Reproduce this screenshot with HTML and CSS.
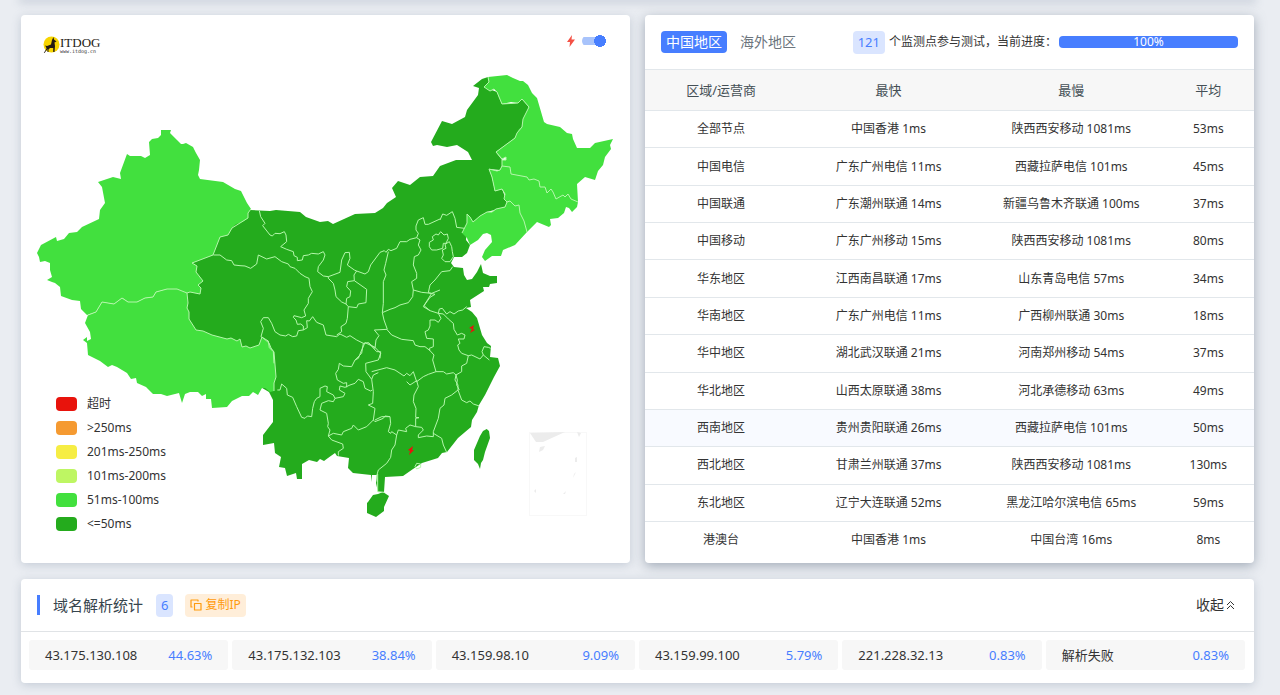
FILE: index.html
```html
<!DOCTYPE html>
<html lang="zh-CN">
<head>
<meta charset="utf-8">
<title>ITDOG 测速</title>
<link rel="stylesheet" href="styles.css">
</head>
<body>
<div class="prev-card"></div>
<main class="page">
  <div class="row">
    <section class="card map-card">
      <svg class="map" viewBox="21 15 609 548" role="img" aria-label="中国地图">
        <path class="dark" d="M250 210L270 211L276 210L300 212L306 217L320 222L328 221L333 224L355 214L375 213L383 208L387 203L396 197L392 188L398 181L410 185L420 177L433 176L440 166L456 160L472 160L468 152L457 145L447 147L437 145L433 146L431 142L442 121L452 124L465 117L467 110L478 95L479 88L473 86L482 79L488 77L489 82L484 87L497 92L502 104L518 103L522 99L529 107L522 127L515 138L496 152L502 160L502 166L500 170L489 169L492 177L495 191L502 189L507 202L505 207L487 212L473 222L467 223L466 240L470 245L467 253L462 257L454 257L451 263L454 267L463 268L464 275L467 280L472 279L477 272L481 264L483 273L490 276L497 276L497 283L490 284L489 287L483 287L484 291L470 300L471 307L466 308L472 312L477 318L482 335L487 343L491 346L490 357L498 358L500 366L494 377L490 385L485 395L479 405L477 412L472 420L471 427L458 438L447 452L442 453L438 458L422 463L413 469L403 476L385 477L384 492L378 492L376 483L377 475L372 475L372 482L371 475L353 473L348 468L349 458L337 456L335 453L328 458L324 461L320 459L317 462L309 460L302 464L302 479L297 479L296 473L287 476L285 468L279 467L281 457L275 453L274 443L263 445L263 435L273 422L273 400L269 392L240 375L175 335L175 280L205 240Z"/>
        <path class="dark" d="M368 502L373 495L378 494L383 492L389 496L384 507L384 511L376 517L367 513L367 503Z"/>
        <path class="dark" d="M486.700 429L489 431L490 438L485 452L483 460L481 463L480 469L478 464L474 460L474 450L477 443L480 436L483 431Z"/>
        <path class="light" d="M161 130L171 130L170 133L177 140L181 144L183 144L186 143L193 147L196 153L200 160L199 170L198 175L200 179L223 182L235 189L241 191L247 203L251 209L248 213L248 218L244 221L240 223L236 224L232 228L228 235L220 237L213 255L192 263L197 266L196 272L203 281L198 285L201 288L200 294L194 293L190 292L187 293L177 289L167 289L156 292L153 297L145 298L137 302L128 302L124 299L122 298L114 304L102 302L96 312L87 315L81 309L80 301L72 300L61 296L60 287L55 283L52 282L47 280L52 277L50 270L50 263L45 261L40 262L39 257L37 253L41 245L56 237L57 241L64 239L69 233L77 232L82 227L99 219L100 210L105 203L102 187L98 182L113 177L121 179L120 173L127 154L130 156L141 156L145 158L150 155L149 142L152 139L158 138L161 135Z"/>
        <path class="light" d="M88 315L96 312L102 302L114 304L122 298L128 302L137 302L145 298L153 297L156 292L167 289L177 289L187 293L187 297L188 303L187 308L189 312L189 319L196 330L203 331L212 335L227 339L231 338L237 341L240 339L242 347L246 346L250 348L259 345L262 337L269 343L271 348L274 352L276 377L274 383L274 391L270 392L265 388L262 388L258 395L253 392L249 396L242 396L232 401L227 407L212 408L211 399L206 399L206 394L202 396L198 392L190 392L185 394L182 403L179 393L167 396L161 394L153 394L146 387L137 383L136 378L131 379L127 373L117 367L112 365L108 367L100 361L88 355L87 343L83 340L87 337L87 341L91 339L90 332L85 323Z"/>
        <path class="light" d="M488 77L507 75L513 78L520 81L523 81L528 85L532 93L537 98L544 122L547 124L560 127L567 133L572 134L573 139L577 148L590 148L595 143L613 139L610 145L611 149L605 157L603 165L598 171L595 180L585 177L577 184L578 202L577 207L572 212L569 208L566 207L564 213L558 218L550 219L551 225L549 227L537 222L527 232L515 245L503 250L501 256L492 256L485 261L482 257L485 250L492 242L491 235L487 233L483 234L478 240L470 245L467 238L462 233L467 223L467 214L470 217L473 222L480 216L487 212L492 212L496 209L505 207L507 202L504 199L505 194L502 189L495 191L492 177L489 169L497 171L500 170L502 166L502 160L506 160L506 157L502 159L496 152L515 138L517 133L519 129L522 127L523 119L529 107L522 99L518 103L511 102L502 104L499 98L497 92L494 89L490 91L484 87L489 82Z"/>
        <g class="line">
          <path d="M251 209L248 213L248 218L240 223L232 228L228 235L220 237L213 255L192 263L197 266L196 272L203 281L198 285L201 288L200 294L190 292L187 293M88 315L96 312L102 302L114 304L122 298L128 302L137 302L145 298L153 297L156 292L167 289L177 289L187 293L188 303L187 308L189 312L189 319L196 330L203 331L212 335L227 339L231 338L237 341L240 339L242 347L246 346L250 348L259 345L262 337L269 343L271 348L274 352L276 377L274 383L274 391M462 233L467 223L467 214L470 217L473 222L480 216L487 212L492 212L496 209L505 207L507 202L504 199L505 194L502 189L495 191L492 177L489 169L497 171L500 170L502 166L502 160L506 160L506 157L502 159L496 152L515 138L517 133L522 127L523 119L529 107L522 99L518 103L502 104L497 92L494 89L490 91L484 87L489 82L488 77"/>
          <path d="M502 166L510 167L511 174L527 177L529 180L534 179L539 181L540 187L545 187L547 193L551 189L553 192L556 199L563 195L565 197L568 194L571 199L578 202M507 202L510 201L515 206L519 205L520 213L524 221L527 232"/>
          <g transform="translate(240 190) scale(.33333)">
            <path d="M58 62L62 80 75 100 68 107 90 135 97 138 105 130 120 131 133 125 138 135 140 155 122 170 140 178 160 185 162 197 172 202 172 212 187 210 190 197 205 195 215 190 235 192 250 185 255 195 250 210 235 230 233 245 250 258 265 260"/>
            <path d="M-80 195L-60 195-40 210-25 212-18 225 0 227 15 228 32 235 50 222 55 195 80 207 105 200 125 215 145 222 150 230 165 235 180 250 195 260 207 265 210 290 217 305 205 325 205 340 192 360 197 378 185 383 162 377 160 382 168 390 172 403 182 402 190 408 190 420 175 422 170 438 158 440 145 433 137 438 120 435 105 425 95 400 85 383 70 383 62 395 70 415 63 440 85 453 88 473 100 485 102 520"/>
            <path d="M265 260L300 247 305 210 315 188 328 187 330 205 322 225 343 240 350 243 342 255 343 272 323 275 320 290 332 303 330 320 320 325 318 342 305 336 288 320 285 300 280 280 265 265ZM343 272L380 298 378 338 355 342 350 353 325 350 318 342M350 243L375 252 385 245 392 225 420 187 433 182 438 187 445 178 453 182 470 175 480 155 500 155 510 148 530 143M445 185L437 220 432 240 438 255 430 275 430 340 427 368M530 143L540 150 535 165 543 180 535 195 523 200 520 225 530 250 530 265 515 275 520 300 518 320 505 338 480 345 465 353 450 358 427 368M530 143L535 130 528 120 528 108 535 90 550 83 555 103 565 103 600 87M325 350L322 385 318 400 303 410 305 425 290 435M190 420L202 413 200 392 208 393 218 380 230 397 250 405 258 435 290 440 300 432 320 442 330 437 350 450 370 460 385 458 405 475 408 450 417 437 403 420 442 418M427 368L432 390 442 418M370 460L365 490 345 510M385 458L410 485 422 485 420 505M520 300L545 307 575 310 600 300M575 310L550 350 570 362"/>
          </g>
          <g transform="translate(420 60) scale(.33333)"><path d="M60 480L68 462 80 466 97 455 105 475 110 502 133 505M28 547L40 540 37 530 48 522 55 525 62 515 72 525 82 522 85 535 78 550 70 550 68 565 50 570 35 570 28 560ZM75 553L88 545 95 560 97 575 100 590 90 605 75 605 65 595 70 585 67 570 78 565Z"/></g>
          <g transform="translate(380 240) scale(.33333)"><path d="M218 80L210 92 185 95 165 120 150 135 145 158 165 163 150 172 132 197 150 212 175 220 178 207 187 205 200 222 210 215 222 222 235 213 248 210 260 200M175 220L183 235 175 247 165 240 150 240 150 258 145 270 135 275 140 295 160 297 160 320 148 325 150 332 162 345 158 360 168 395 145 403 130 410 110 425 100 395 90 407 80 400 72 408 45 390 20 383 -25 395M22 270L35 285 65 298 100 302 105 315 120 320 135 320 150 332M175 220L190 222 205 237 220 250 222 268 232 285 245 280 255 285 252 297 235 297 240 310 233 315 237 330 245 340 265 347 275 345 300 357 310 345 328 360M310 345L306 335 312 320 325 322 332 325M265 347L260 370 245 378 245 395 228 405 232 420 230 435 238 450M168 395L190 395 200 402 220 398 228 405"/></g>
          <g transform="translate(370 370) scale(.33333)"><path d="M140 32L145 50 132 75 130 95 138 115 137 142 147 143 137 145 137 170M110 35L120 45 140 32M258 15L255 30 264 45 264 60 275 90 290 98 300 93 310 102 328 108M264 60L245 75 225 85 222 105 210 115 205 145 190 185 190 200 170 198 145 203 145 195 160 180 155 172 137 170 120 165 107 175 110 185 85 180 80 195 65 185 62 190 55 185 62 160 60 140 35 140 15 150M190 190L215 205 220 225 230 247M80 195L75 225 65 240 62 262 50 280 25 300 20 318 22 335M135 290L140 280 152 282 152 292 140 297Z"/></g>
          <g transform="translate(250 310) scale(.33333)"><path d="M82 240L90 240 95 222 110 235 112 255 128 262 140 290 155 322 165 325 172 318 185 320 188 295 193 275 200 265 210 260 210 235 225 228 232 230 230 245 250 255 255 265 280 260 285 250 268 240 270 228 285 232 300 225 315 220 325 208 340 215 345 235 362 243 367 240M345 98L335 120 325 145 315 150 305 170 280 168 268 160 265 178 257 190 262 210 280 220 290 218 290 232M255 265L250 275 235 272 215 280 210 300 230 310 235 340 233 350 240 360 235 378 250 370 275 375 280 365 305 355 310 345 325 360 350 350 370 330 375 335 400 325 405 318 420 320M235 378L245 390 278 402 280 415 265 425 265 437M345 98L375 112 392 130 385 150 347 160 348 185 365 208 370 195 385 188M365 208L370 245 368 280 355 285 375 295 370 330M383 492L383 545 403 547"/></g>
        </g>
        <g class="bolt"><path d="M474 325L469 328L472 329L470 333L475 330L473 329Z"/><path d="M413 446L408 450L410 451L409 455L414 450L412 450Z"/></g>
        <rect class="inset-frame" x="529.500" y="432.500" width="57" height="83"/>
        <path class="inset" d="M530 433L565 432L543 442L536 442ZM577 432L581 433L579 437ZM540 447L545 446L543 450L539 452ZM575 458L577 457L577 462L575 462ZM574 474L576 472L573 478ZM563 494L566 491L565 494ZM534 491L536 489L536 493Z"/>
      </svg>
      <div class="logo">
        <svg class="logo-mark" viewBox="0 0 17 17" aria-hidden="true"><circle cx="8.500" cy="8.500" r="8" fill="#f7d500"/><path d="M2 9.500L4 10L8 8.500L9 4L10.500 1L11 3.500L13.500 5.500L11.500 6.500L12 10L11.500 16H10.200V12L7 12L5.500 13.500L5.500 16H4.500V13L1.500 17L.8 17L3.500 12.500L3 11Z" fill="#231a12"/></svg>
        <div><div class="logo-name">ITDOG</div><div class="logo-url">www.itdog.cn</div></div>
      </div>
      <label class="switch">
        <svg width="8" height="12" viewBox="0 0 8 12" aria-hidden="true"><path d="M5 0L0 7H3L2.500 12L8 4.500H4.500Z" fill="#f45145"/></svg>
        <input type="checkbox" checked aria-label="闪电标记">
      </label>
      <ul class="legend">
        <li><i class="swatch c-timeout"></i>超时</li>
        <li><i class="swatch c-250"></i>&gt;250ms</li>
        <li><i class="swatch c-201"></i>201ms-250ms</li>
        <li><i class="swatch c-101"></i>101ms-200ms</li>
        <li><i class="swatch c-51"></i>51ms-100ms</li>
        <li><i class="swatch c-50"></i>&lt;=50ms</li>
      </ul>
    </section>
    <section class="card stats">
      <header class="stats-head">
        <button class="tab active" type="button">中国地区</button>
        <button class="tab" type="button">海外地区</button>
        <div class="status"><span class="badge">121</span><span>个监测点参与测试，当前进度：</span></div>
        <div class="progress" role="progressbar" aria-valuenow="100">100%</div>
      </header>
      <div class="table-wrap">
      <table>
        <colgroup><col class="col-a"><col class="col-b"><col class="col-c"><col class="col-d"></colgroup>
        <thead><tr><th>区域/运营商</th><th>最快</th><th>最慢</th><th>平均</th></tr></thead>
        <tbody>
          <tr><td>全部节点</td><td>中国香港 1ms</td><td>陕西西安移动 1081ms</td><td>53ms</td></tr>
          <tr><td>中国电信</td><td>广东广州电信 11ms</td><td>西藏拉萨电信 101ms</td><td>45ms</td></tr>
          <tr><td>中国联通</td><td>广东潮州联通 14ms</td><td>新疆乌鲁木齐联通 100ms</td><td>37ms</td></tr>
          <tr><td>中国移动</td><td>广东广州移动 15ms</td><td>陕西西安移动 1081ms</td><td>80ms</td></tr>
          <tr><td>华东地区</td><td>江西南昌联通 17ms</td><td>山东青岛电信 57ms</td><td>34ms</td></tr>
          <tr><td>华南地区</td><td>广东广州电信 11ms</td><td>广西柳州联通 30ms</td><td>18ms</td></tr>
          <tr><td>华中地区</td><td>湖北武汉联通 21ms</td><td>河南郑州移动 54ms</td><td>37ms</td></tr>
          <tr><td>华北地区</td><td>山西太原联通 38ms</td><td>河北承德移动 63ms</td><td>49ms</td></tr>
          <tr class="current"><td>西南地区</td><td>贵州贵阳联通 26ms</td><td>西藏拉萨电信 101ms</td><td>50ms</td></tr>
          <tr><td>西北地区</td><td>甘肃兰州联通 37ms</td><td>陕西西安移动 1081ms</td><td>130ms</td></tr>
          <tr><td>东北地区</td><td>辽宁大连联通 52ms</td><td>黑龙江哈尔滨电信 65ms</td><td>59ms</td></tr>
          <tr><td>港澳台</td><td>中国香港 1ms</td><td>中国台湾 16ms</td><td>8ms</td></tr>
        </tbody>
      </table>
      </div>
    </section>
  </div>
  <section class="card">
    <header class="dns-head">
      <h2>域名解析统计</h2>
      <span class="badge">6</span>
      <button class="copy" type="button"><svg width="12" height="12" viewBox="0 0 12 12" aria-hidden="true"><path d="M4.500 4.500h6.500v6.500h-6.500zM2.500 8H1V1H8V2.500" fill="none" stroke="currentColor" stroke-width="1.200" stroke-linejoin="round"/></svg>复制IP</button>
      <button class="fold" type="button">收起<svg width="9" height="10" viewBox="0 0 9 10" aria-hidden="true"><path d="M1 5L4.500 1.500L8 5M1 9L4.500 5.500L8 9" fill="none" stroke="currentColor"/></svg></button>
    </header>
    <ul class="ips">
      <li><span>43.175.130.108</span><b>44.63%</b></li>
      <li><span>43.175.132.103</span><b>38.84%</b></li>
      <li><span>43.159.98.10</span><b>9.09%</b></li>
      <li><span>43.159.99.100</span><b>5.79%</b></li>
      <li><span>221.228.32.13</span><b>0.83%</b></li>
      <li><span>解析失败</span><b>0.83%</b></li>
    </ul>
  </section>
</main>
</body>
</html>
```
FILE: styles.css
```css
* { box-sizing: border-box; }
body {
  margin: 0;
  background: #eaedf2;
  color: #333;
  font: 12px/18px "Noto Sans", "Noto Sans CJK SC", sans-serif;
}
button { border: 0; padding: 0; background: none; font: inherit; color: inherit; cursor: pointer; }
ul { list-style: none; margin: 0; padding: 0; }
.prev-card { margin: 0 26px 0 21px; box-shadow: 0 0 8px 2px rgba(120, 135, 160, .45); }
.page { display: flex; flex-direction: column; gap: 16px; padding: 15px 26px 12px 21px; }
.row { display: grid; grid-template-columns: 1fr 1fr; gap: 15px; }
.card { background: #fff; border-radius: 4px; box-shadow: 0 2px 10px rgba(110, 125, 150, .3); }

.map-card { position: relative; }
.map { display: block; width: 100%; }
.dark { fill: #24ab1d; }
.light { fill: #42e03e; }
.line { fill: none; stroke: #b4f7ab; stroke-linejoin: round; }
.line > path { stroke-width: 1; }
.line g { stroke-width: 3; }
.bolt { fill: #e8130c; }
.inset-frame { fill: none; stroke: #f8f8f8; }
.inset { fill: #ececec; }
.logo { position: absolute; left: 22px; top: 21px; display: flex; gap: 0; }
.logo-mark { width: 17px; height: 17px; }
.logo-name { font: 13px/13px "Liberation Serif", serif; color: #231a12; }
.logo-url { font: 5px/5px "DejaVu Sans Mono", monospace; color: #333; }
.switch { position: absolute; right: 23px; top: 20px; display: flex; align-items: center; gap: 7px; }
.switch input {
  appearance: none; width: 25px; height: 12px; margin: 0;
  background: radial-gradient(circle at 18px 6px, #477eff 6px, transparent 6px), linear-gradient(#a8c3fb, #a8c3fb) 0 2px / 19px 8px no-repeat;
  border-radius: 6px;
}
.legend { position: absolute; left: 35px; bottom: 27px; line-height: 24px; }
.legend li { display: flex; align-items: center; gap: 10px; }
.swatch { width: 21px; height: 14px; border-radius: 4px; }
.c-timeout { background: #e8130c; }
.c-250 { background: #f59a31; }
.c-201 { background: #f6ed44; }
.c-101 { background: #bef663; }
.c-51 { background: #42e03e; }
.c-50 { background: #24ab1d; }

.stats { display: flex; flex-direction: column; padding-bottom: 5px; box-shadow: 0 3px 12px rgba(90, 105, 125, .5); }
.stats-head { display: flex; align-items: center; height: 54px; padding: 0 16px; }
.tab { height: 22px; padding: 0 5px; margin-right: 8px; border-radius: 4px; font-size: 14px; color: #6c757d; }
.tab.active { background: #477eff; color: #fff; }
.status { display: flex; align-items: center; gap: 4px; margin-left: auto; white-space: nowrap; }
.badge { padding: 0 5px; border-radius: 4px; background: #dae5ff; color: #477eff; font-size: 13px; line-height: 23px; }
.progress { width: 179px; margin-left: 2px; border-radius: 4px; background: #477eff; color: #fff; line-height: 12px; text-align: center; }
.table-wrap { flex: 1; display: flex; }
table { width: 100%; border-collapse: collapse; table-layout: fixed; text-align: center; }
.col-a { width: 25%; }
.col-b { width: 30%; }
.col-c { width: 30%; }
.col-d { width: 15%; }
th { height: 41px; padding: 0; background: #f7f7f7; font-size: 13px; font-weight: 400; color: #444f55; }
td { padding: 0; }
tr { border-top: 1px solid #e2e7eb; }
.current { background: #f8faff; }

.dns-head { display: flex; align-items: center; height: 53px; padding: 0 19px 0 16px; border-bottom: 1px solid #e0e3e6; }
h2 { margin: 0 13px 0 0; padding-left: 13px; border-left: 3px solid #477eff; font-size: 15px; line-height: 20px; font-weight: 400; color: #37454d; }
.copy { display: flex; align-items: center; gap: 3px; height: 23px; margin-left: 12px; padding: 0 5px; border-radius: 4px; background: #ffeed9; color: #ff9b0c; }
.fold { display: flex; align-items: center; gap: 2px; margin-left: auto; font-size: 14px; }
.ips { display: grid; grid-template-columns: repeat(6, 1fr); gap: 4px; padding: 8px 9px 13px 8px; }
.ips li { display: flex; justify-content: space-between; align-items: center; height: 30px; padding: 0 16px; border-radius: 3px; background: #f7f7f7; font-size: 13px; }
.ips b { font-weight: 400; color: #477eff; }
```
